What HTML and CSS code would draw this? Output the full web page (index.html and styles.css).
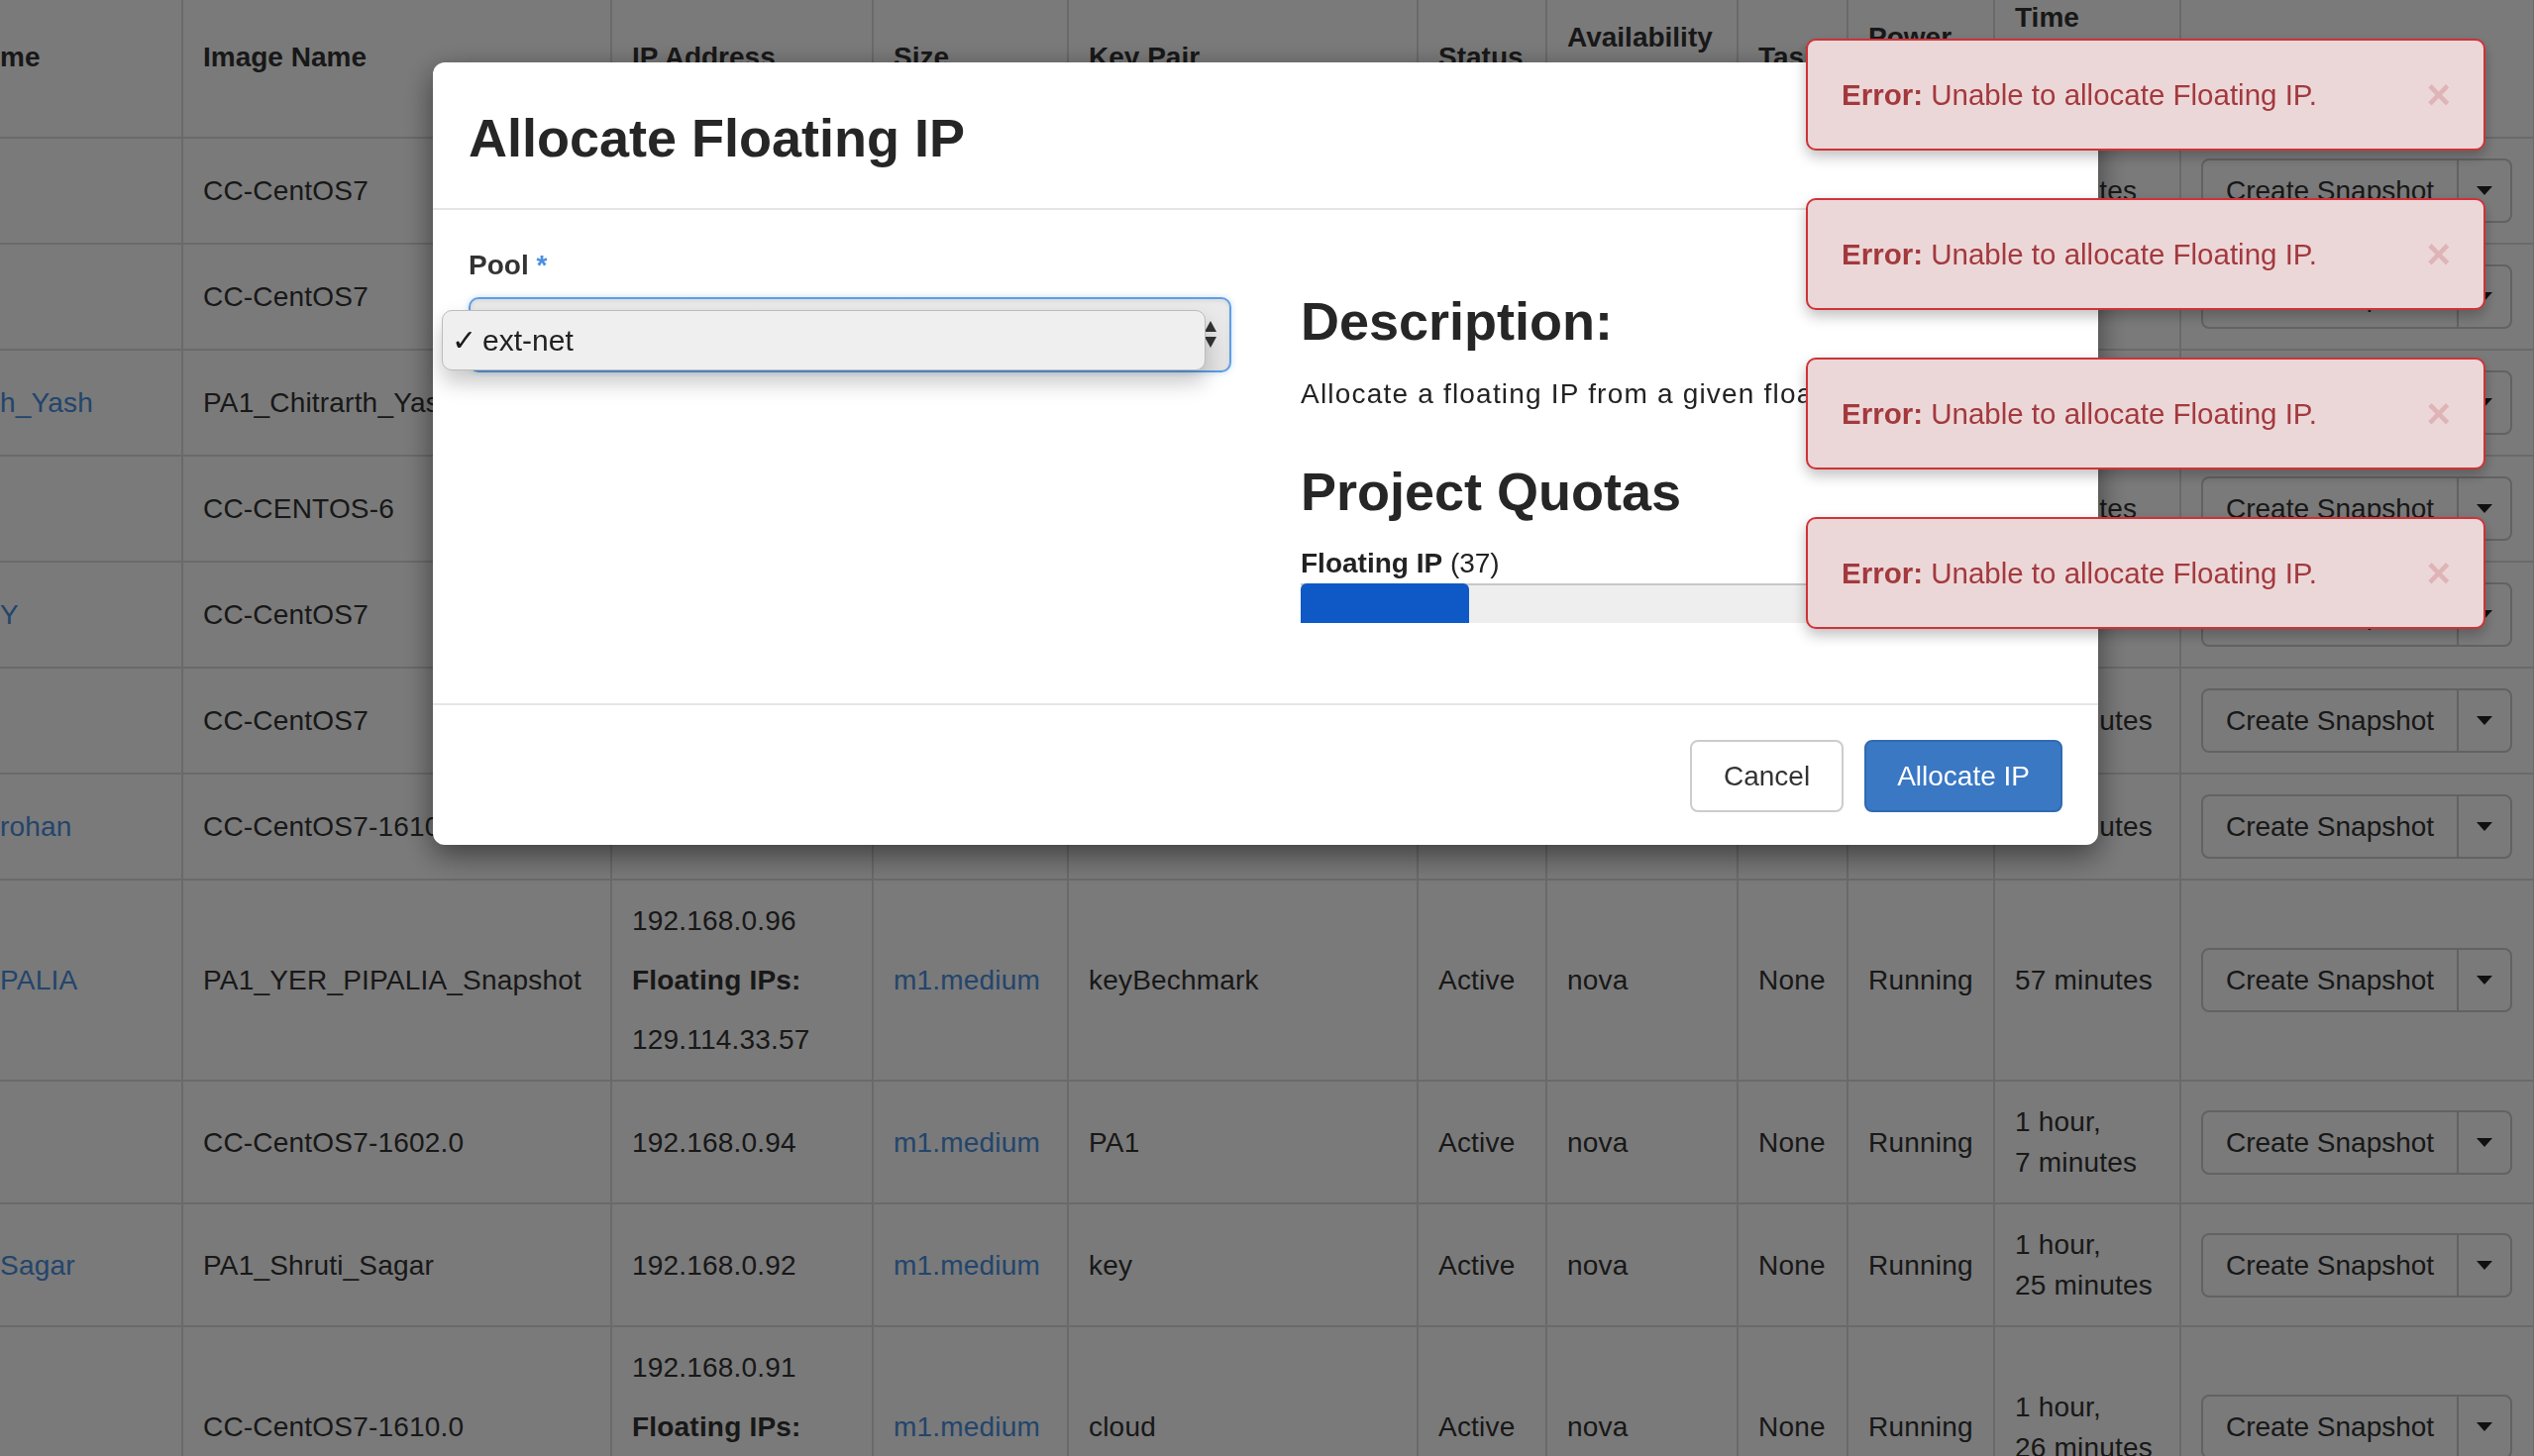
FILE: index.html
```html
<!DOCTYPE html>
<html lang="en">
<head>
<meta charset="utf-8">
<title>Instances - Allocate Floating IP</title>
<link rel="stylesheet" href="styles.css">
</head>
<body>
<main class="page">
  <table class="instances">
    <colgroup>
      <col class="col-name"><col class="col-image"><col class="col-ip"><col class="col-size"><col class="col-key"><col class="col-status"><col class="col-az"><col class="col-task"><col class="col-power"><col class="col-time"><col class="col-actions">
    </colgroup>
    <thead>
      <tr>
        <th class="first">me</th><th>Image Name</th><th>IP Address</th><th>Size</th><th>Key Pair</th><th>Status</th><th>Availability<br>Zone</th><th>Task</th><th>Power<br>State</th><th>Time<br>since<br>created</th><th>Actions</th>
      </tr>
    </thead>
    <tbody>
      <tr>
        <td class="first"></td><td>CC-CentOS7</td><td>192.168.0.104</td><td><a href="#">m1.medium</a></td><td>cloud</td><td>Active</td><td>nova</td><td>None</td><td>Running</td><td>8&nbsp;minutes</td>
        <td><div class="split"><span class="split-main">Create Snapshot</span><span class="split-caret"><i class="caret"></i></span></div></td>
      </tr>
      <tr>
        <td class="first"></td><td>CC-CentOS7</td><td>192.168.0.103</td><td><a href="#">m1.medium</a></td><td>key</td><td>Active</td><td>nova</td><td>None</td><td>Running</td><td>9&nbsp;minutes</td>
        <td><div class="split"><span class="split-main">Create Snapshot</span><span class="split-caret"><i class="caret"></i></span></div></td>
      </tr>
      <tr>
        <td class="first"><a href="#">h_Yash</a></td><td>PA1_Chitrarth_Yash</td><td>192.168.0.102</td><td><a href="#">m1.medium</a></td><td>PA1</td><td>Active</td><td>nova</td><td>None</td><td>Running</td><td>9&nbsp;minutes</td>
        <td><div class="split"><span class="split-main">Create Snapshot</span><span class="split-caret"><i class="caret"></i></span></div></td>
      </tr>
      <tr>
        <td class="first"></td><td>CC-CENTOS-6</td><td>192.168.0.101</td><td><a href="#">m1.medium</a></td><td>key</td><td>Active</td><td>nova</td><td>None</td><td>Running</td><td>9&nbsp;minutes</td>
        <td><div class="split"><span class="split-main">Create Snapshot</span><span class="split-caret"><i class="caret"></i></span></div></td>
      </tr>
      <tr>
        <td class="first"><a href="#">Y</a></td><td>CC-CentOS7</td><td>192.168.0.100</td><td><a href="#">m1.medium</a></td><td>key</td><td>Active</td><td>nova</td><td>None</td><td>Running</td><td>9&nbsp;minutes</td>
        <td><div class="split"><span class="split-main">Create Snapshot</span><span class="split-caret"><i class="caret"></i></span></div></td>
      </tr>
      <tr>
        <td class="first"></td><td>CC-CentOS7</td><td>192.168.0.99</td><td><a href="#">m1.medium</a></td><td>key</td><td>Active</td><td>nova</td><td>None</td><td>Running</td><td>26&nbsp;minutes</td>
        <td><div class="split"><span class="split-main">Create Snapshot</span><span class="split-caret"><i class="caret"></i></span></div></td>
      </tr>
      <tr>
        <td class="first"><a href="#">rohan</a></td><td>CC-CentOS7-1610.0</td><td>192.168.0.97</td><td><a href="#">m1.medium</a></td><td>key</td><td>Active</td><td>nova</td><td>None</td><td>Running</td><td>33&nbsp;minutes</td>
        <td><div class="split"><span class="split-main">Create Snapshot</span><span class="split-caret"><i class="caret"></i></span></div></td>
      </tr>
      <tr>
        <td class="first"><a href="#">PALIA</a></td><td>PA1_YER_PIPALIA_Snapshot</td>
        <td><div class="ip-list"><span>192.168.0.96</span><strong>Floating IPs:</strong><span>129.114.33.57</span></div></td>
        <td><a href="#">m1.medium</a></td><td>keyBechmark</td><td>Active</td><td>nova</td><td>None</td><td>Running</td><td>57&nbsp;minutes</td>
        <td><div class="split"><span class="split-main">Create Snapshot</span><span class="split-caret"><i class="caret"></i></span></div></td>
      </tr>
      <tr>
        <td class="first"></td><td>CC-CentOS7-1602.0</td><td>192.168.0.94</td><td><a href="#">m1.medium</a></td><td>PA1</td><td>Active</td><td>nova</td><td>None</td><td>Running</td><td>1&nbsp;hour, 7&nbsp;minutes</td>
        <td><div class="split"><span class="split-main">Create Snapshot</span><span class="split-caret"><i class="caret"></i></span></div></td>
      </tr>
      <tr>
        <td class="first"><a href="#">Sagar</a></td><td>PA1_Shruti_Sagar</td><td>192.168.0.92</td><td><a href="#">m1.medium</a></td><td>key</td><td>Active</td><td>nova</td><td>None</td><td>Running</td><td>1&nbsp;hour, 25&nbsp;minutes</td>
        <td><div class="split"><span class="split-main">Create Snapshot</span><span class="split-caret"><i class="caret"></i></span></div></td>
      </tr>
      <tr>
        <td class="first"></td><td>CC-CentOS7-1610.0</td>
        <td><div class="ip-list"><span>192.168.0.91</span><strong>Floating IPs:</strong><span>129.114.33.61</span></div></td>
        <td><a href="#">m1.medium</a></td><td>cloud</td><td>Active</td><td>nova</td><td>None</td><td>Running</td><td>1&nbsp;hour, 26&nbsp;minutes</td>
        <td><div class="split"><span class="split-main">Create Snapshot</span><span class="split-caret"><i class="caret"></i></span></div></td>
      </tr>
    </tbody>
  </table>
</main>

<div class="backdrop"></div>

<div class="modal" role="dialog" aria-labelledby="modal-title">
  <header class="modal-header">
    <h3 class="modal-title" id="modal-title">Allocate Floating IP</h3>
  </header>
  <div class="modal-body">
    <div class="form-col">
      <label class="field-label">Pool <span class="req">*</span></label>
      <div class="select">
        <svg class="select-arrows" width="14" height="29" viewBox="0 0 14 29" aria-hidden="true">
          <polygon points="1,12 7,1 13,12" fill="#333"/>
          <polygon points="1,17 13,17 7,28" fill="#333"/>
        </svg>
        <div class="select-menu"><span class="check">&#10003;</span><span class="option">ext-net</span></div>
      </div>
    </div>
    <div class="help-col">
      <h3 class="help-title">Description:</h3>
      <p class="help-text">Allocate a floating IP from a given floating IP pool.</p>
      <h3 class="quota-title">Project Quotas</h3>
      <div class="quota-label"><strong>Floating IP</strong> (37)</div>
      <div class="progress"><div class="progress-bar" style="width: 22.1%"></div></div>
    </div>
  </div>
  <footer class="modal-footer">
    <button class="btn" type="button">Cancel</button>
    <button class="btn btn-primary" type="button">Allocate IP</button>
  </footer>
</div>

<div class="toasts">
  <div class="toast"><span><strong>Error:</strong> Unable to allocate Floating IP.</span><span class="close">&times;</span></div>
  <div class="toast"><span><strong>Error:</strong> Unable to allocate Floating IP.</span><span class="close">&times;</span></div>
  <div class="toast"><span><strong>Error:</strong> Unable to allocate Floating IP.</span><span class="close">&times;</span></div>
  <div class="toast"><span><strong>Error:</strong> Unable to allocate Floating IP.</span><span class="close">&times;</span></div>
</div>
</body>
</html>
```
FILE: styles.css
```css
* { box-sizing: border-box; }

html, body {
  margin: 0;
  height: 100%;
  overflow: hidden;
}

body {
  font-family: "Liberation Sans", Arial, sans-serif;
  font-size: 28px;
  line-height: 40px;
  color: #333;
  background: #fff;
}

a { color: #4a90e2; text-decoration: none; }

/* ---------- instances table (behind the backdrop) ---------- */
.page { margin-top: -22px; }

.instances {
  width: 2558px;
  border-collapse: collapse;
  table-layout: fixed;
}

.col-name { width: 184px; }
.col-image { width: 433px; }
.col-ip { width: 264px; }
.col-size { width: 197px; }
.col-key { width: 353px; }
.col-status { width: 130px; }
.col-az { width: 193px; }
.col-task { width: 111px; }
.col-power { width: 148px; }
.col-time { width: 188px; }
.col-actions { width: 357px; }

.instances th,
.instances td {
  padding: 20px;
  border: 2px solid #ddd;
  text-align: left;
  vertical-align: middle;
}

.instances th {
  font-weight: 700;
  line-height: 40px;
  border-top: 0;
}

.instances td {
  line-height: 41px;
  letter-spacing: 0.2px;
}

.instances .first {
  padding-left: 0;
  border-left: 0;
  white-space: nowrap;
  overflow: hidden;
}

.ip-list {
  display: flex;
  flex-direction: column;
  gap: 19px;
}

.split {
  display: inline-flex;
  height: 65px;
  border: 2px solid #ccc;
  border-radius: 8px;
  background: #fff;
  white-space: nowrap;
  letter-spacing: 0;
}

.split-main {
  display: flex;
  align-items: center;
  padding: 0 23px;
}

.split-caret {
  display: flex;
  align-items: center;
  justify-content: center;
  width: 54px;
  border-left: 2px solid #ccc;
}

.caret {
  width: 0;
  height: 0;
  border-top: 9px solid #222;
  border-left: 8px solid transparent;
  border-right: 8px solid transparent;
}

/* ---------- backdrop ---------- */
.backdrop {
  position: fixed;
  inset: 0;
  background: rgba(0, 0, 0, 0.52);
}

/* ---------- modal ---------- */
.modal {
  position: fixed;
  left: 437px;
  top: 63px;
  width: 1681px;
  background: #fff;
  border-radius: 12px;
  box-shadow: 0 10px 30px rgba(0, 0, 0, 0.5);
  color: #222;
}

.modal-header {
  padding: 44px 36px 39px;
  border-bottom: 2px solid #e5e5e5;
}

.modal-title,
.help-title,
.quota-title {
  margin: 0;
  font-size: 54px;
  line-height: 64px;
  font-weight: 700;
  color: #262626;
}

.modal-body {
  display: grid;
  grid-template-columns: 770px 769px;
  column-gap: 70px;
  padding: 36px;
}

.field-label {
  display: block;
  font-weight: 700;
  color: #333;
  margin-bottom: 12px;
}

.req { color: #4a8fe0; }

.select {
  position: relative;
  height: 76px;
  border: 2px solid #5d9ee6;
  border-radius: 10px;
  background: linear-gradient(#ebebeb, #e3e3e3);
  box-shadow: inset 0 2px 4px rgba(0, 0, 0, 0.08), 0 0 6px rgba(93, 158, 230, 0.35);
}

.select-arrows {
  position: absolute;
  right: 12px;
  top: 21px;
}

.select-menu {
  position: absolute;
  left: -29px;
  top: 11px;
  width: 771px;
  height: 61px;
  display: flex;
  align-items: center;
  gap: 9px;
  padding-left: 9px;
  background: #efefef;
  border: 1px solid #bcbcbc;
  border-radius: 10px;
  box-shadow: 0 12px 22px rgba(0, 0, 0, 0.22);
  font-size: 30px;
  color: #222;
}

.check {
  font-family: "DejaVu Sans", sans-serif;
  font-size: 30px;
  line-height: 1;
  width: 22px;
  color: #1a1a1a;
}

.help-title { margin-top: 44px; }

.help-text {
  margin: 22px 0 46px;
  white-space: nowrap;
  overflow: hidden;
  letter-spacing: 1.2px;
}

.quota-label {
  margin-top: 21px;
  color: #222;
}

.progress {
  height: 40px;
  margin-bottom: 45px;
  background: #eee;
  box-shadow: inset 0 2px 0 #c7c7c7;
}

.progress-bar {
  height: 100%;
  background: #0f59c6;
  border-radius: 6px 6px 0 0;
}

.modal-footer {
  display: flex;
  justify-content: flex-end;
  gap: 21px;
  padding: 35px 36px 33px;
  border-top: 2px solid #e5e5e5;
}

.btn {
  height: 73px;
  padding: 0 32px;
  font-family: inherit;
  font-size: 28px;
  color: #333;
  background: #fff;
  border: 2px solid #ccc;
  border-radius: 8px;
}

.btn-primary {
  padding: 0 31px;
  color: #fff;
  background: #3a78c4;
  border-color: #2f6bb2;
}

/* ---------- error toasts ---------- */
.toasts {
  position: fixed;
  top: 39px;
  left: 1823px;
  width: 686px;
  display: flex;
  flex-direction: column;
  gap: 48px;
}

.toast {
  height: 113px;
  display: flex;
  align-items: center;
  padding: 0 33px 0 34px;
  background: #ecd7d8;
  border: 2px solid #cf3237;
  border-radius: 10px;
  box-shadow: 0 6px 14px rgba(0, 0, 0, 0.25);
  color: #a3393d;
  font-size: 29.5px;
}

.toast .close {
  margin-left: auto;
  font-size: 42px;
  font-weight: 700;
  color: #dfb4b7;
}
```
